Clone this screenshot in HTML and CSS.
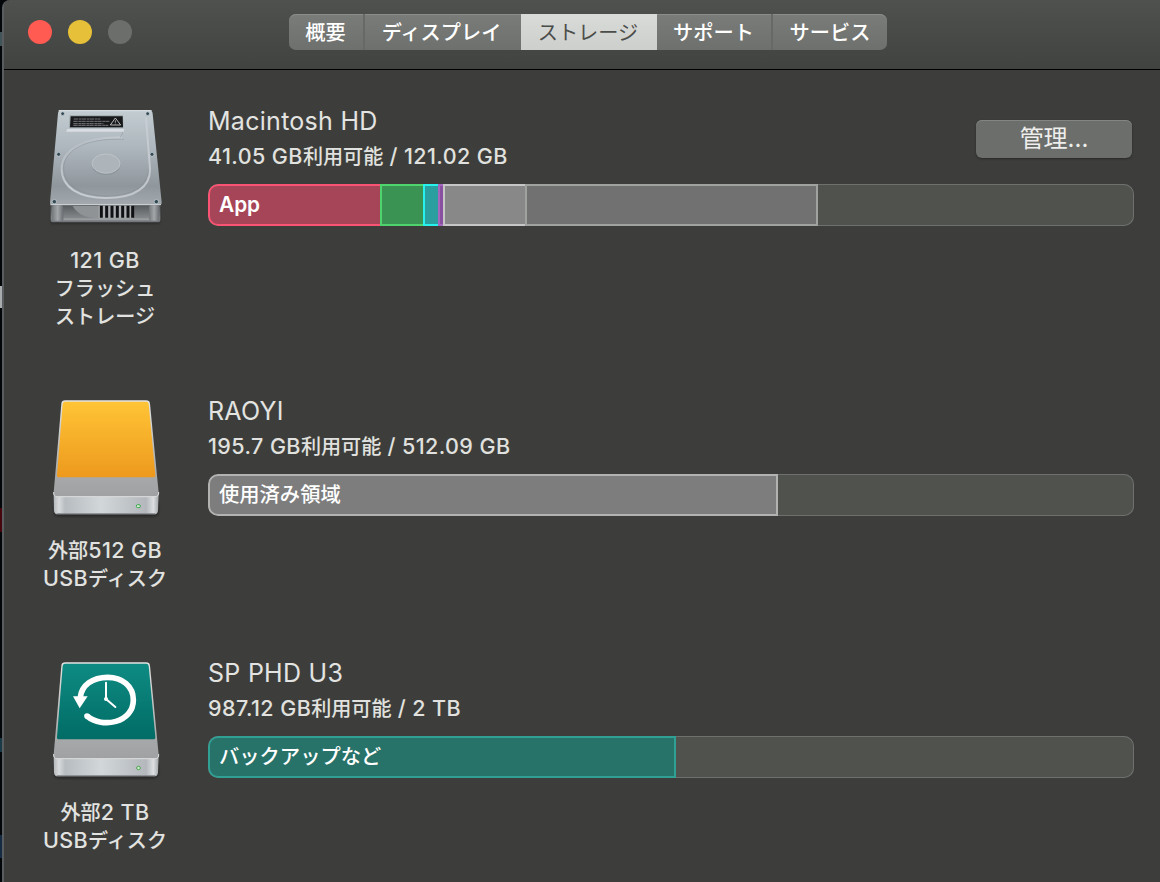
FILE: index.html
```
<!DOCTYPE html>
<html lang="ja">
<head>
<meta charset="utf-8">
<title>ストレージ</title>
<link rel="stylesheet" href="styles.css">
</head>
<body>
<div class="screen">
<div class="backdrop"></div>
<main class="window">
  <header class="titlebar">
    <div class="lights"><i class="light red"></i><i class="light yellow"></i><i class="light gray"></i></div>
    <nav class="tabs">
      <a class="tab t1">概要</a><a class="tab t2">ディスプレイ</a><a class="tab t3 active">ストレージ</a><a class="tab t4">サポート</a><a class="tab t5">サービス</a>
    </nav>
  </header>

  <div class="drives">
    <section class="drive">
      <div class="side">
        <svg class="icon" viewBox="0 0 450 453">
          <defs>
            <linearGradient id="hdTop" x1="0" y1="0" x2="0" y2="1"><stop offset="0" stop-color="#c3ccd1"/><stop offset=".4" stop-color="#adb6bc"/><stop offset=".8" stop-color="#8f979d"/><stop offset="1" stop-color="#a3a9ae"/></linearGradient>
            <linearGradient id="hdFront" x1="0" y1="0" x2="0" y2="1"><stop offset="0" stop-color="#54575a"/><stop offset=".75" stop-color="#85888b"/><stop offset="1" stop-color="#6f7276"/></linearGradient>
            <linearGradient id="hdDish" x1="0" y1="0" x2="1" y2="1"><stop offset="0" stop-color="#a5aeb4"/><stop offset=".5" stop-color="#c8cfd4"/><stop offset="1" stop-color="#bfc4c9"/></linearGradient>
            <linearGradient id="post" x1="0" y1="0" x2="1" y2="0"><stop offset="0" stop-color="#74787b"/><stop offset=".5" stop-color="#a4a7aa"/><stop offset="1" stop-color="#696c70"/></linearGradient>
            <filter id="soft"><feGaussianBlur stdDeviation="3"/></filter>
          </defs>
          <path d="M62 332H390V382Q390 388 382 388H70Q62 388 62 382Z" fill="#222" opacity=".6" filter="url(#soft)"/>
          <path d="M62 328H391V374Q391 382 383 382H70Q62 382 62 374Z" fill="url(#hdFront)"/>
          <path d="M128 333Q150 372 212 370V333Z" fill="#909396"/>
          <path d="M100 370H360V376H100Z" fill="#9a9da0"/>
          <rect x="66" y="331" width="34" height="46" rx="6" fill="url(#post)"/>
          <rect x="357" y="331" width="31" height="46" rx="6" fill="url(#post)"/>
          <rect x="206" y="332" width="104" height="38" fill="#aaaeb0"/>
          <path d="M214 332v36M230 332v36M246 332v36M262 332v36M278 332v36M294 332v36M308 332v36" stroke="#101112" stroke-width="9"/>
          <path d="M93 46H356Q367 46 368 56L395 322Q396 330 387 330H68Q59 330 60 322L84 55Q85 46 93 46Z" fill="url(#hdTop)"/>
          <path d="M86 47H365" stroke="#e0e6e9" stroke-width="3"/>
          <path d="M61 329H393" stroke="#d1d6d9" stroke-width="3"/>
          <path d="M276 128C165 124 96 164 95 220C94 278 148 309 228 309C317 309 361 275 360 222L348 68" fill="none" stroke="url(#hdDish)" stroke-width="6"/>
          <path d="M279 111L270 130M282 133C166 128 101 166 101 220C102 271 154 302 229 303C309 303 353 272 355 224" fill="none" stroke="#7f898e" stroke-width="2" opacity=".55"/>
          <path d="M112 102H283L281 110H108Z" fill="#d7dde0"/>
          <path d="M119 61H279L280 99H117Z" fill="#9ca7ac"/>
          <path d="M122 64H278L279 97H120Z" fill="#171819"/>
          <path d="M131 72H211M130 79H238M130 86H220M130 91H235" stroke="#a5a8a9" stroke-width="2" stroke-dasharray="13 2 8 1"/>
          <path d="M256 69L272 90H241Z" fill="none" stroke="#d5d6d6" stroke-width="2.5"/><path d="M256 76V83M256 86V88" stroke="#eee" stroke-width="2"/>
          <ellipse cx="228" cy="210" rx="43" ry="30" fill="#8b9499"/>
          <ellipse cx="228" cy="206" rx="42" ry="29" fill="#adb5ba" stroke="#c7cdd1" stroke-width="2"/>
          <g fill="#324a55" stroke="#d0d7da" stroke-width="2"><circle cx="98" cy="56" r="5.5"/><circle cx="353" cy="56" r="5.5"/><circle cx="86" cy="178" r="6"/><circle cx="366" cy="178" r="6"/><circle cx="73" cy="320" r="6.5"/><circle cx="379" cy="320" r="6.5"/></g>
        </svg>
        <p class="caption">121 GB<br><span class="jp">フラッシュ</span><br><span class="jp">ストレージ</span></p>
      </div>
      <div class="info">
        <div class="head">
          <div>
            <h2 class="name">Macintosh HD</h2>
            <p class="free">41.05 GB<span class="jp">利用可能</span> / 121.02 GB</p>
          </div>
          <button class="manage">管理...</button>
        </div>
        <div class="bar">
          <div class="seg app">App</div><div class="seg green"></div><div class="seg cyan"></div><div class="seg purple"></div><div class="seg light-gray"></div><div class="seg mid-gray"></div>
        </div>
      </div>
    </section>

    <section class="drive">
      <div class="side">
        <svg class="icon" viewBox="0 0 450 453">
          <defs>
            <linearGradient id="orange" x1="0" y1="0" x2="0" y2="1"><stop offset="0" stop-color="#ffc436"/><stop offset="1" stop-color="#ed991d"/></linearGradient>
            <linearGradient id="teal" x1="0" y1="0" x2="0" y2="1"><stop offset="0" stop-color="#0e8b83"/><stop offset="1" stop-color="#016c65"/></linearGradient>
            <linearGradient id="deck" x1="0" y1="0" x2="0" y2="1"><stop offset="0" stop-color="#e4e4e2"/><stop offset=".8" stop-color="#a7a8a9"/><stop offset="1" stop-color="#a0a1a2"/></linearGradient>
            <linearGradient id="face" x1="0" y1="0" x2="1" y2="0"><stop offset="0" stop-color="#b5b8bb"/><stop offset=".05" stop-color="#d8dadc"/><stop offset=".11" stop-color="#b7bcc0"/><stop offset=".45" stop-color="#d2d7da"/><stop offset=".88" stop-color="#b4b8bc"/><stop offset=".95" stop-color="#dcdee0"/><stop offset="1" stop-color="#a4a7aa"/></linearGradient>
            <g id="shell">
              <path d="M73 350H385V382Q384 394 372 394H85Q73 394 73 382Z" fill="#1c1d1c" opacity=".7" filter="url(#soft)"/>
              <path d="M71 323H386L384 377Q383 388 372 388H84Q73 388 72 377Z" fill="url(#face)"/>
              <path d="M80 386H376" stroke="#85898c" stroke-width="3"/>
              <path d="M106 46H348Q359 46 360 56L386 323Q386 335 375 335H82Q70 335 71 323L94 56Q95 46 106 46Z" fill="url(#deck)"/>
              <path d="M71 321Q70 335 82 335H375Q387 335 386 321" fill="none" stroke="#dedfdf" stroke-width="3"/>
            </g>
            <path id="panel" d="M105 50H349Q355 50 356 57L376 270Q377 277 369 277H88Q80 277 81 270L98 57Q99 50 105 50Z"/>
          </defs>
          <use href="#shell"/><use href="#panel" fill="url(#orange)"/>
          <rect x="319" y="359" width="12" height="9" rx="4" fill="#d6ead8" stroke="#39a64a" stroke-width="3"/>
        </svg>
        <p class="caption"><span class="jp">外部</span>512 GB<br>USB<span class="jp">ディスク</span></p>
      </div>
      <div class="info">
        <div class="head"><div>
          <h2 class="name">RAOYI</h2>
          <p class="free">195.7 GB<span class="jp">利用可能</span> / 512.09 GB</p>
        </div></div>
        <div class="bar"><div class="seg used">使用済み領域</div></div>
      </div>
    </section>

    <section class="drive">
      <div class="side">
        <svg class="icon" viewBox="0 0 450 453">
          <use href="#shell"/><use href="#panel" fill="url(#teal)"/>
          <path d="M171 207C217 246 310 227 310 159C310 117 276 91 233 91C187 91 155 115 151 151" fill="none" stroke="#fff" stroke-width="17"/>
          <circle cx="171" cy="207" r="8.5" fill="#fff"/>
          <path d="M129 148H173L149 184Z" fill="#fff"/>
          <path d="M228 107V156L256 180" fill="none" stroke="#fff" stroke-width="6" stroke-linecap="round"/><circle cx="228" cy="156" r="6" fill="#fff"/>
          <rect x="320" y="358" width="11" height="10" rx="5" fill="#d6ead8" stroke="#49a34b" stroke-width="3"/>
        </svg>
        <p class="caption"><span class="jp">外部</span>2 TB<br>USB<span class="jp">ディスク</span></p>
      </div>
      <div class="info">
        <div class="head"><div>
          <h2 class="name">SP PHD U3</h2>
          <p class="free">987.12 GB<span class="jp">利用可能</span> / 2 TB</p>
        </div></div>
        <div class="bar"><div class="seg backup">バックアップなど</div></div>
      </div>
    </section>
  </div>
</main>
</div>
</body>
</html>
```
FILE: styles.css
```
* { box-sizing: border-box; margin: 0; padding: 0; }
body {
  background: #050709;
  font-family: Inter, "Noto Sans CJK JP", sans-serif;
  overflow: hidden;
}
.screen { display: flex; width: 1160px; height: 882px; }
.backdrop {
  width: 2px;
  background: linear-gradient(#04070a 0 32px, #40545a 32px 46px, #04070a 46px 286px, #a8acad 286px 308px, #04070a 308px 508px, #45070d 508px 532px, #04070a 532px 738px, #1a3a48 738px 752px, #04070a 752px 835px, #142b42 835px 858px, #04070a 858px);
}
.window {
  flex: 1;
  background: #3d3e3c;
  border-left: 2px solid #595d60;
  border-top-left-radius: 8px;
}
.titlebar {
  display: flex;
  height: 70px;
  padding-left: 24px;
  background: linear-gradient(#4f514e, #414340);
  border-bottom: 1px solid #000;
  border-top-left-radius: 6px;
}
.lights { display: flex; gap: 16px; width: 261px; padding-top: 20px; }
.light { width: 24px; height: 24px; border-radius: 50%; }
.red { background: #ff5b52; }
.yellow { background: #e6c039; }
.gray { background: #6c6e6b; }
.tabs {
  display: flex;
  height: 36px;
  margin-top: 14px;
  border-radius: 7px;
  overflow: hidden;
  background: linear-gradient(#7a7c79, #6e706d);
  box-shadow: inset 0 1px #8b8d8a;
}
.tab { color: #fff; font-size: 20.2px; font-weight: 500; line-height: 38px; text-align: center; }
.t1 { width: 76px; padding-right: 1px; border-right: 2px solid #676966; }
.t2 { width: 156px; padding-right: 3px; }
.t3 { width: 136px; padding-right: 2px; }
.t4 { width: 116px; padding-right: 1px; border-right: 2px solid #676966; }
.t5 { width: 114px; }
.active { background: linear-gradient(#d9dbd8, #cdcfcc); color: #4b4d4a; font-weight: 400; }
.drives { display: flex; flex-direction: column; gap: 55px; padding: 25px 26px 0 26px; }
.drive { display: flex; gap: 28px; }
.side { width: 150px; }
.icon { display: block; width: 150px; height: 151px; }
.caption {
  color: #e2e3e0;
  font-size: 21.5px;
  font-weight: 450;
  letter-spacing: .4px;
  line-height: 28px;
  text-align: center;
  white-space: nowrap;
}
.jp { font-size: 20.1px; letter-spacing: 0; line-height: 1; }
.info { width: 926px; padding-top: 10px; }
.head { display: flex; justify-content: space-between; height: 79px; }
.name { color: #e3e4e1; font-size: 25px; font-weight: 430; letter-spacing: .28px; line-height: 32px; }
.free { margin-top: 5px; color: #e1e2df; font-size: 21.5px; font-weight: 450; letter-spacing: .42px; line-height: 28px; }
.manage {
  width: 156px;
  height: 38px;
  margin: 15px 2px 0 0;
  border: 0;
  border-radius: 6px;
  background: #6c6e6b;
  box-shadow: inset 0 1px #838582, 0 1px 2px #292a28;
  color: #eeefec;
  font: 400 24px/36px Inter, "Noto Sans CJK JP", sans-serif;
}
.bar {
  display: flex;
  height: 42px;
  border-radius: 10px;
  overflow: hidden;
  background: #50524e;
  box-shadow: inset 0 0 0 1px #6e706d;
}
.seg {
  border: 2px solid;
  border-right: 0;
  color: #fff;
  font-size: 20.3px;
  font-weight: 500;
  line-height: 38px;
  padding-left: 9px;
  white-space: nowrap;
}
.app { width: 172px; background: #a64458; border-color: #fa5373; border-radius: 10px 0 0 10px; font-size: 20.8px; font-weight: 600; }
.green { width: 43px; background: #3a9253; border-color: #4fd36d; padding: 0; }
.cyan { width: 15px; background: #2b9e9f; border-color: #27f1ec; padding: 0; }
.purple { width: 5px; background: #8950a0; border-color: #a566bd; padding: 0; }
.light-gray { width: 82px; background: #888; border-color: #c5c6c5; padding: 0; }
.mid-gray { width: 293px; background: #717171; border-color: #a0a29f; border-right: 2px solid #a0a29f; padding: 0; }
.used { width: 570px; background: #7d7d7d; border-color: #b2b3b1; border-right: 2px solid #b2b3b1; border-radius: 10px 0 0 10px; }
.backup { width: 468px; background: #277269; border-color: #30a095; border-right: 2px solid #30a095; border-radius: 10px 0 0 10px; }
```
